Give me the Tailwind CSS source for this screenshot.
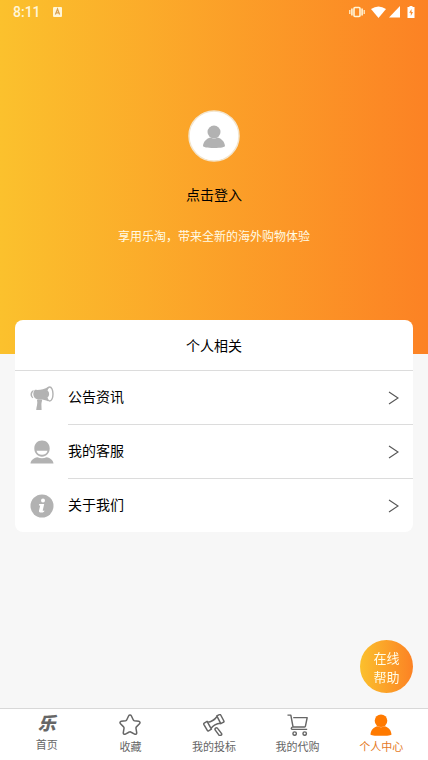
<!DOCTYPE html>
<html lang="zh-CN">
<head>
<meta charset="utf-8">
<meta name="viewport" content="width=device-width, initial-scale=1">
<title>个人中心</title>
<script src="https://cdn.jsdelivr.net/npm/@tailwindcss/browser@4"></script>
</head>
<body class="flex min-h-screen flex-col bg-[#f7f7f7] font-['Noto_Sans_CJK_SC',sans-serif] text-black">
<header class="bg-linear-to-r/srgb from-[#fbc12d] to-[#fc8224] pb-[108px] text-center">
  <div class="flex h-6 items-center justify-between pr-[13px] pl-[13px] text-[#fff6d8]">
    <div class="flex items-center gap-[11px]">
      <span class="font-['Roboto',sans-serif] text-sm font-medium">8:11</span>
      <svg class="mb-[2px] size-[11px]" viewBox="0 0 11 11" aria-hidden="true"><rect x="1" y="1" width="9" height="10" rx="1" fill="currentColor"/><path d="M3.400 8.500 5.500 3 7.600 8.500M4.200 6.900h2.600" fill="none" stroke="#d9a050" stroke-width="1.200"/></svg>
    </div>
    <div class="flex items-center" aria-hidden="true">
      <svg class="h-3 w-4" viewBox="0 0 16 12" fill="none" stroke="currentColor"><rect x="5" y="1.500" width="6" height="9" rx="1" stroke-width="1.600"/><path d="M2.900 2.500v7M13.100 2.500v7" stroke-width="1.600"/><path d="M.8 4v4M15.200 4v4" stroke-width="1.200"/></svg>
      <svg class="ml-[6px] h-3 w-[15px]" viewBox="0 0 15 12" fill="#fff"><path d="M0 3Q7.500-2 15 3L7.500 12Z"/></svg>
      <svg class="ml-[2px] h-3 w-3" viewBox="0 0 12 12" fill="#fff"><path d="M12 0v11.500H1Z"/></svg>
      <svg class="ml-[7px] h-3 w-2" viewBox="0 0 8 12"><path d="M2.500 0h3v1h2v11h-7V1h2Z" fill="#fff"/><path d="M4.500 3 2.200 6.800h1.600V10L6 6H4.500Z" fill="#fb8b2b"/></svg>
    </div>
  </div>
  <svg class="mx-auto mt-[86px] size-[52px]" viewBox="0 0 52 52" role="img" aria-label="头像"><circle cx="26" cy="26" r="25" fill="#fff" stroke="#f3e5cd" stroke-width="1.500"/><g fill="#b2b2b2"><circle cx="26" cy="22" r="6.500"/><path d="M15 36c.3-4.500 3.800-7.500 7.300-8.500 2.200 1.500 5.200 1.500 7.400 0 3.500 1 7 4 7.300 8.500 0 1-4 2-11 2s-11-1-11-2Z"/></g></svg>
  <h1 class="mt-5"><a href="#login" class="block text-sm leading-6">点击登入</a></h1>
  <p class="mt-5 text-xs leading-5 text-[#fffbe6]">享用乐淘，带来全新的海外购物体验</p>
</header>

<main class="relative mx-[15px] -mt-[34px] rounded-lg bg-white">
  <h2 class="border-b border-[#dcdcdc] text-center text-sm leading-[50px]">个人相关</h2>
  <ul>
    <li><a href="#news" class="flex items-center pl-[15px]">
      <svg class="size-6" viewBox="0 0 24 24" fill="#b2b2b2" aria-hidden="true"><path d="M3.500 4C.9 5-.2 8 1 10.500c.4.800 1.100 1.500 2 1.800l.2-1.100C1.500 9.900 1.700 7.200 3.500 5.200Z"/><path d="M5 3.800C9.500 4.200 14 3.500 18.500.8L18 15.200c-3-1.300-6.500-1.900-10-1.500L6 12.800C2.800 11 2.500 6.500 5 3.800Z"/><path d="M7 14c2-.6 3.500-.6 5.200-.3-.2 1.500-.8 3-.8 4.800l.2 5.500H6.200c.2-3.500 1.800-6.500.8-10Z"/><ellipse cx="19.700" cy="8" rx="3.300" ry="7" fill="#fff" stroke="#b2b2b2" stroke-width="1.400"/><path d="M17 4.500c2.800.7 2.800 6.300 0 7Z"/></svg>
      <span class="ml-[14px] flex flex-1 items-center justify-between border-b border-[#dcdcdc] pr-[14px] text-sm"><span class="pb-[2px] leading-[51px]">公告资讯</span><svg class="h-[14px] w-[11px]" viewBox="0 0 11 14" fill="none" stroke="#555" stroke-width="1.100" aria-hidden="true"><path d="m1 1 9 6-9 6"/></svg></span></a></li>
    <li><a href="#service" class="flex items-center pl-[15px]">
      <svg class="size-6" viewBox="0 0 24 24" fill="#b2b2b2" aria-hidden="true"><path d="M12 .5c4.600 0 7.700 3.500 7.700 8s-3.300 8.200-7.700 8.200-7.700-3.700-7.700-8.200 3.100-8 7.700-8Z"/><path d="M6.500 10.800h11c-.5 2.600-2.600 4-5.500 4s-5-1.400-5.500-4Z" fill="#fff"/><path d="M.5 23.500c.3-3.500 3-5.500 7-6.300 2.700 1.500 6.300 1.500 9 0 4 .8 6.700 2.800 7 6.300Z"/></svg>
      <span class="ml-[14px] flex flex-1 items-center justify-between border-b border-[#dcdcdc] pr-[14px] text-sm"><span class="pb-[2px] leading-[51px]">我的客服</span><svg class="h-[14px] w-[11px]" viewBox="0 0 11 14" fill="none" stroke="#555" stroke-width="1.100" aria-hidden="true"><path d="m1 1 9 6-9 6"/></svg></span></a></li>
    <li><a href="#about" class="flex items-center pl-[15px]">
      <svg class="size-6" viewBox="0 0 24 24" aria-hidden="true"><circle cx="12" cy="12" r="11.500" fill="#b2b2b2"/><circle cx="13" cy="6.600" r="2" fill="#fff"/><path d="M9.200 10h5l-1.500 6.500c0 .5.900.4 1.700-.1l-.3 1.300c-1.900 1.300-5.600 1.200-5.100-.9l1.200-5.400H8.900Z" fill="#fff"/></svg>
      <span class="ml-[14px] flex flex-1 items-center justify-between pr-[14px] text-sm"><span class="pb-[2px] leading-[51px]">关于我们</span><svg class="h-[14px] w-[11px]" viewBox="0 0 11 14" fill="none" stroke="#555" stroke-width="1.100" aria-hidden="true"><path d="m1 1 9 6-9 6"/></svg></span></a></li>
  </ul>
</main>

<button type="button" class="fixed right-[15px] bottom-[67px] size-[53px] rounded-full bg-linear-to-r/srgb from-[#fbc02d] to-[#fc8224] text-[13px] leading-[19px] text-[#fffbe6]">在线<br>帮助</button>

<nav class="sticky bottom-0 mt-auto grid h-[52px] grid-cols-5 border-t border-[#d8d8d8] bg-white px-[5px] text-[11px] leading-4 text-[#666]">
  <a href="#home" class="flex flex-col items-center pt-[3px]"><span class="mb-1 text-lg leading-5 font-black italic" aria-hidden="true">乐</span><span>首页</span></a>
  <a href="#favorites" class="flex flex-col items-center pt-[5px]"><svg class="mb-[2px] size-[22px]" viewBox="0 0 22 22" fill="none" stroke="currentColor" stroke-width="1.500" stroke-linejoin="round" aria-hidden="true"><path d="M9.700 1.800c.5-1.100 2.100-1.100 2.600 0l1.900 4c.2.500.7.800 1.200.9l4.300.6c1.300.2 1.700 1.700.8 2.500l-3.100 3.100c-.4.400-.5.900-.4 1.400l.7 4.300c.2 1.200-1 2.100-2.100 1.500L11.700 18c-.5-.3-1-.3-1.400 0l-3.900 2.100c-1.100.6-2.300-.3-2.100-1.500l.7-4.300c.1-.5-.1-1-.4-1.400L1.500 9.800c-.9-.8-.5-2.300.8-2.500l4.300-.6c.5-.1 1-.4 1.200-.9Z"/></svg><span>收藏</span></a>
  <a href="#bids" class="flex flex-col items-center pt-[5px]"><svg class="mb-[2px] size-[22px]" viewBox="0 0 22 22" fill="none" stroke="currentColor" stroke-width="1.500" stroke-linejoin="round" aria-hidden="true"><path d="m1.200 9.100 2.900-1.700 4.300 7.800-2.800 1.600c-.5.300-1 .1-1.300-.4L.8 10.300c-.2-.5-.1-.9.400-1.200ZM13.800 1.900l2.700-1.300c.5-.2 1-.1 1.200.4l3.200 6c.2.500.1 1-.4 1.200L17.800 9.700ZM4.500 8.200c4-.4 7-2.300 9.300-5.500M7.900 14.500c2-3 6-5 9.800-5.300"/><path d="M12.600 14.200c.8-.6 1.700-.4 2.200.4l3.800 5c.3.500.2 1.100-.3 1.400l-1 .5c-.5.300-1 .1-1.300-.4l-3.700-5c-.5-.7-.3-1.400.3-1.900Z"/></svg><span>我的投标</span></a>
  <a href="#orders" class="flex flex-col items-center pt-[5px]"><svg class="mb-[2px] size-[22px]" viewBox="0 0 22 23" fill="none" stroke="currentColor" stroke-width="1.500" stroke-linejoin="round" aria-hidden="true"><path d="M0 1.200h3.500l2.300 12.300c-2.300.5-2.400 2.600-.4 2.600h15.200M6 3.800h14.600l-1.800 8.900c-.1.500-.4.800-.9.800H5.800"/><circle cx="7.500" cy="20.500" r="1.800"/><circle cx="18" cy="20.500" r="1.800"/></svg><span>我的代购</span></a>
  <a href="#me" aria-current="page" class="flex flex-col items-center pt-[5px] text-[#ff7a00]"><svg class="mb-[2px] size-[22px]" viewBox="0 0 22 22" fill="currentColor" aria-hidden="true"><circle cx="11" cy="6.800" r="6.300"/><path d="M.5 20.500c.2-4.500 3.300-7.700 7.200-8.300 2 1.500 4.600 1.500 6.600 0 3.900.6 7 3.800 7.200 8.300 0 1-4 1.300-10.500 1.300S.5 21.500.5 20.500Z"/></svg><span class="text-[#e57a26]">个人中心</span></a>
</nav>
</body>
</html>
